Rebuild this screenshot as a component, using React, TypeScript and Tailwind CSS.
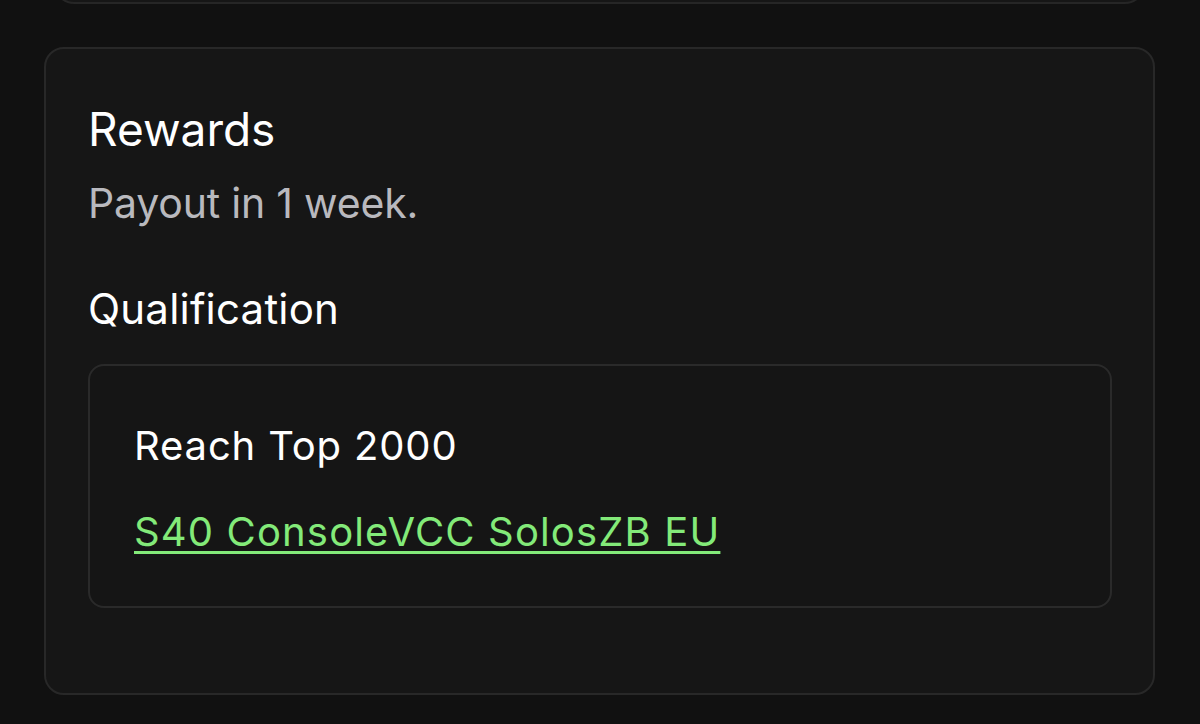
import React from "react";

export default function App() {
  return (
    <div
      className="w-[1200px] h-[724px] overflow-hidden bg-[#111111] flex flex-col"
      style={{ fontFamily: "Inter, 'Noto Sans', sans-serif" }}
    >
      <div className="ml-[54px] w-[1091px] h-[64px] mt-[-60px] shrink-0 rounded-[20px] border-2 border-[#262626] bg-[#161616]" />
      <div className="ml-[44px] mt-[43px] w-[1111px] h-[648px] shrink-0 rounded-[20px] border-2 border-[#282828] bg-[#161616] pl-[42px] pr-[41px] pt-[54px] flex flex-col">
        <div className="text-[46px] leading-[52px] text-white">Rewards</div>
        <div className="mt-[22px] text-[41px] leading-[52px] text-[#b9b9be] tracking-[-0.2px]">Payout in 1 week.</div>
        <div className="mt-[54px] text-[42px] leading-[52px] text-white tracking-[0.2px]">Qualification</div>
        <div className="mt-[29px] h-[244px] rounded-[16px] border-2 border-[#2a2a2a] bg-[#151515] pl-[44px] pt-[57px] flex flex-col items-start">
          <div className="text-[40px] leading-[46px] text-white tracking-[0.85px]">Reach Top 2000</div>
          <a
            href="#"
            className="mt-[40px] text-[40px] leading-[46px] text-[#83ea79] underline underline-offset-[5px] decoration-[3px] tracking-[1.15px]"
          >
            S40 ConsoleVCC SolosZB EU
          </a>
        </div>
      </div>
    </div>
  );
}
